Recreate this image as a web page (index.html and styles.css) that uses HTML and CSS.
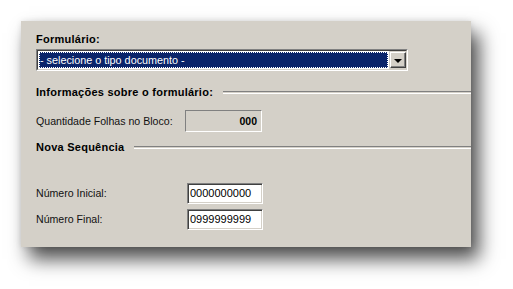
FILE: index.html
```html
<!DOCTYPE html>
<html>
<head>
<meta charset="utf-8">
<link rel="stylesheet" href="styles.css">
</head>
<body>
<div class="stage">
<div class="panel">
  <div class="label-bold lbl-form">Formulário:</div>
  <div class="combo">
    <div class="combo-field"><div class="combo-sel">- selecione o tipo documento -</div></div>
    <div class="combo-btn"><span class="arrow"></span></div>
  </div>
  <div class="group-head gh1"><span class="label-bold">Informações sobre o formulário:</span><span class="rule"></span></div>
  <div class="row qty-row">
    <span class="label">Quantidade Folhas no Bloco:</span>
    <span class="ro-box">000</span>
  </div>
  <div class="group-head gh2"><span class="label-bold">Nova Sequência</span><span class="rule"></span></div>
  <div class="row in-row1">
    <span class="label">Número Inicial:</span>
    <span class="txt">0000000000</span>
  </div>
  <div class="row in-row2">
    <span class="label">Número Final:</span>
    <span class="txt">0999999999</span>
  </div>
</div>
</div>
</body>
</html>
```
FILE: styles.css
```css
html, body {
  margin: 0;
  padding: 0;
  background: #ffffff;
}
body {
  font-family: "Liberation Sans", Arial, sans-serif;
  font-size: 11px;
  color: #000;
}
.stage {
  width: 513px;
  height: 289px;
  box-sizing: border-box;
  padding: 21px 0 0 21px;
}
.panel {
  width: 450px;
  height: 226px;
  box-sizing: border-box;
  padding: 12px 0 0 15px;
  background: #d4d0c8;
  box-shadow: 8px 12px 18px rgba(0,0,0,0.7), 0 0 6px rgba(0,0,0,0.1);
  display: flex;
  flex-direction: column;
}
.label-bold {
  font-weight: bold;
  font-size: 11px;
  line-height: 13px;
  letter-spacing: 0.25px;
  color: #000;
}
.label {
  font-size: 10.6px;
  line-height: 13px;
  color: #111;
}
.lbl-form {
  height: 13px;
  margin-bottom: 3px;
}
.combo {
  width: 372px;
  height: 22px;
  box-sizing: border-box;
  border-top: 1px solid #808080;
  border-left: 1px solid #808080;
  border-right: 1px solid #ffffff;
  border-bottom: 1px solid #ffffff;
  display: flex;
  position: relative;
}
.combo::before {
  content: "";
  position: absolute;
  inset: 0;
  border-top: 1px solid #404040;
  border-left: 1px solid #404040;
  border-right: 1px solid #d4d0c8;
  border-bottom: 1px solid #d4d0c8;
  pointer-events: none;
}
.combo-field {
  flex: 1;
  margin: 1px 0 1px 1px;
  background: #ffffff;
  padding: 1px;
  display: flex;
}
.combo-sel {
  flex: 1;
  background: #0a246a;
  color: #ffffff;
  outline: 1px dotted #ffffff;
  outline-offset: -1px;
  line-height: 16px;
  padding-left: 1px;
  font-size: 10.8px;
  white-space: nowrap;
}
.combo-btn {
  width: 16px;
  margin: 2px 1px 2px 1px;
  box-sizing: border-box;
  background: #d4d0c8;
  border-top: 1px solid #ffffff;
  border-left: 1px solid #ffffff;
  border-right: 1px solid #404040;
  border-bottom: 1px solid #404040;
  box-shadow: inset -1px -1px 0 #808080;
  display: flex;
  align-items: center;
  justify-content: center;
}
.arrow {
  width: 0;
  height: 0;
  border-left: 4px solid transparent;
  border-right: 4px solid transparent;
  border-top: 4px solid #000;
  margin: 1px 1px 0 0;
}
.group-head {
  display: flex;
  align-items: center;
  height: 13px;
}
.group-head .label-bold {
  white-space: nowrap;
}
.rule {
  flex: 1;
  height: 1px;
  border-top: 1px solid #808080;
  border-bottom: 1px solid #ffffff;
  margin-left: 10px;
}
.gh1 {
  margin-top: 15px;
}
.gh2 {
  margin-top: 9px;
}
.row {
  display: flex;
  align-items: center;
}
.row .label {
  width: 149px;
  flex: none;
}
.qty-row {
  margin-top: 11px;
}
.ro-box {
  width: 77px;
  height: 22px;
  box-sizing: border-box;
  border-top: 1px solid #808080;
  border-left: 1px solid #808080;
  border-right: 1px solid #ffffff;
  border-bottom: 1px solid #ffffff;
  text-align: right;
  font-weight: bold;
  font-size: 10.5px;
  line-height: 20px;
  padding-right: 4px;
}
.in-row1 {
  margin-top: 29px;
}
.in-row2 {
  margin-top: 5px;
}
.in-row1 .label, .in-row2 .label {
  width: 151px;
}
.txt {
  width: 76px;
  height: 21px;
  box-sizing: border-box;
  background: #ffffff;
  border-top: 1px solid #808080;
  border-left: 1px solid #808080;
  border-right: 1px solid #ffffff;
  border-bottom: 1px solid #ffffff;
  box-shadow: inset 1px 1px 0 #404040, inset -1px -1px 0 #d4d0c8;
  padding-left: 2px;
  line-height: 19px;
  font-size: 11px;
}
```
